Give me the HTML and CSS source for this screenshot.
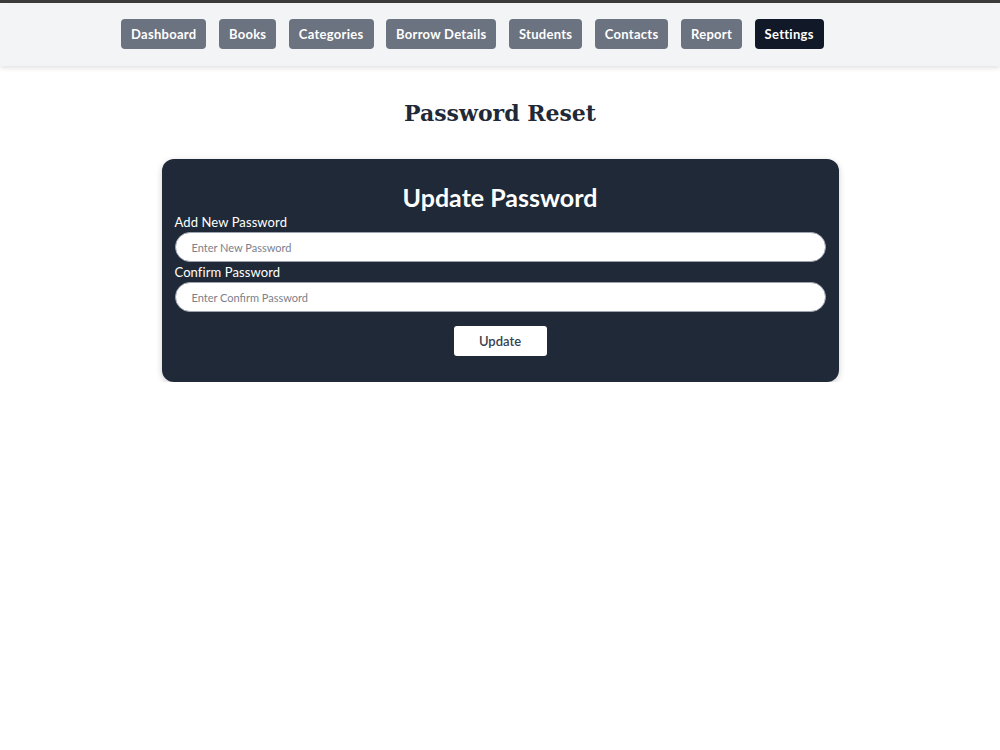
FILE: index.html
```html
<!DOCTYPE html>
<html lang="en">
<head>
    <meta charset="UTF-8">
    <meta name="viewport" content="width=device-width, initial-scale=1.0">
    <title>Settings - Password Reset</title>
    <link rel="stylesheet" href="styles.css">
</head>
<body>
<div class="top-line"></div>
<nav class="navbar">
    <div class="nav-links">
        <a href="#" class="nav-btn">Dashboard</a>
        <a href="#" class="nav-btn">Books</a>
        <a href="#" class="nav-btn">Categories</a>
        <a href="#" class="nav-btn">Borrow Details</a>
        <a href="#" class="nav-btn">Students</a>
        <a href="#" class="nav-btn">Contacts</a>
        <a href="#" class="nav-btn">Report</a>
        <a href="#" class="nav-btn active">Settings</a>
    </div>
</nav>
<main class="content">
    <h1 class="page-title">Password Reset</h1>
    <form class="reset-card" onsubmit="return false;">
        <h2>Update Password</h2>
        <label for="new-pass">Add New Password</label>
        <input type="password" id="new-pass" placeholder="Enter New Password">
        <label for="confirm-pass">Confirm Password</label>
        <input type="password" id="confirm-pass" placeholder="Enter Confirm Password">
        <div class="actions">
            <button type="submit" class="update-btn">Update</button>
        </div>
    </form>
</main>
</body>
</html>
```

FILE: styles.css
```css
body { margin: 0; font-family: Lato, "Open Sans", sans-serif; background: #fff; color: #1f2937; }
.top-line { height: 3px; background: #3c3c3c; }
.navbar { background: #f3f4f6; height: 63px; box-shadow: 0 2px 5px rgba(0,0,0,0.12); display: flex; align-items: center; }
.nav-links { display: flex; gap: 12.5px; padding-left: 121px; margin-top: -2px; }
.nav-btn { display: block; height: 30px; line-height: 30px; padding: 0 10px; background: #6b7280; color: #fff; font-size: 13px; font-weight: 700; letter-spacing: 0.28px; text-decoration: none; border-radius: 4px; }
.nav-btn.active { background: #111827; }
.content { padding-top: 30px; }
.page-title { margin: 0; text-align: center; font-family: "DejaVu Serif", Georgia, serif; font-size: 22px; font-weight: 700; color: #1f2937; line-height: 34px; }
.reset-card { width: 651px; margin: 29px auto 0; padding: 22px 13px 26px; background: #1f2937; border-radius: 12px; box-shadow: 0 2px 6px rgba(0,0,0,0.2); display: flex; flex-direction: column; }
.reset-card h2 { margin: 0 0 2px; text-align: center; color: #fff; font-size: 25px; font-weight: 700; line-height: 32px; }
.reset-card label { color: #fff; font-size: 13px; line-height: 15px; margin-bottom: 2px; letter-spacing: 0.1px; }
.reset-card input { height: 30px; box-sizing: border-box; border: 1px solid #9ca3af; border-radius: 15px; padding: 0 16px; font-family: inherit; font-size: 11px; margin-bottom: 3px; background: #fff; }
.reset-card input::placeholder { color: #7b818c; }
.actions { display: flex; justify-content: center; margin-top: 11px; }
.update-btn { width: 93px; height: 30px; background: #fff; color: #374151; border: none; border-radius: 3px; font-family: inherit; font-size: 13px; font-weight: 600; cursor: pointer; }
```
